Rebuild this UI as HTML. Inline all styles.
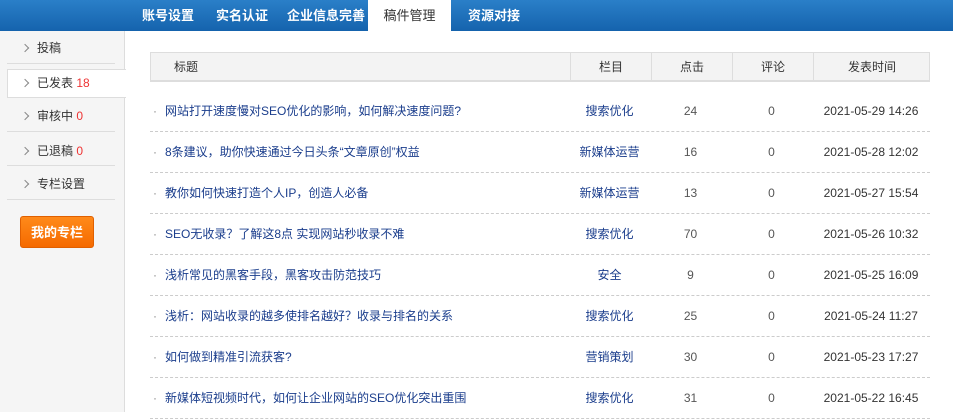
<!DOCTYPE html>
<html><head><meta charset="utf-8"><style>
*{margin:0;padding:0;box-sizing:border-box}
body{width:953px;height:412px;overflow:hidden;background:#fff;font-family:"Liberation Sans","Noto Sans CJK SC",sans-serif;font-size:12px;color:#333;position:relative}
.top{position:absolute;left:0;top:0;width:953px;height:31px;background:linear-gradient(#2a7fc8,#1563ad);}
.tab{position:absolute;top:0;height:31px;line-height:31px;color:#fff;font-weight:bold;font-size:13px}
.tab.on{background:#fff;color:#333;font-weight:normal;left:368px;width:83px;text-align:center}
.side{position:absolute;left:0;top:31px;width:125px;height:381px;background:#f5f5f5;border-right:1px solid #ddd}
.it{position:absolute;left:22px;width:92px;font-size:12px;color:#333;line-height:16px}
.it:before{content:"";position:absolute;left:0;top:5px;width:5px;height:5px;border-top:1px solid #888;border-right:1px solid #888;transform:rotate(45deg)}
.it span{margin-left:15px}
.ln{position:absolute;left:7px;width:108px;height:1px;background:#ddd}
.red{color:#e33;font-weight:normal}
.btn{position:absolute;left:20px;top:216px;width:74px;height:32px;background:linear-gradient(#ff8a1a,#f56a00);border-radius:3px;color:#fff;font-weight:bold;font-size:13px;text-align:center;line-height:31px;border:1px solid #e06000}
.th{position:absolute;left:150px;top:52px;width:780px;height:30px;background:#f3f3f3;border:1px solid #ddd;border-bottom:2px solid #ddd}
.th div{position:absolute;top:0;height:28px;line-height:28px;text-align:center;font-size:12px;color:#333}
.sep{border-left:1px solid #ddd}
.row{position:absolute;left:150px;width:780px;height:41px;border-bottom:1px dashed #ccc;font-size:12px}
.row div{position:absolute;top:0;line-height:40px}
.t{left:15px;color:#1a3d8c}
.t:before{content:"·";position:absolute;left:-12px;color:#888}
.c{left:419px;width:81px;text-align:center;color:#1a3d8c}
.n{left:500px;width:81px;text-align:center;color:#555}
.m{left:581px;width:81px;text-align:center;color:#555}
.d{left:662px;width:118px;text-align:center;color:#333}
</style></head><body>
<div class="top"></div>
<div class="tab" style="left:142px">账号设置</div>
<div class="tab" style="left:216px">实名认证</div>
<div class="tab" style="left:287px">企业信息完善</div>
<div class="tab on">稿件管理</div>
<div class="tab" style="left:468px">资源对接</div>
<div class="side">
<div class="it" style="top:9px"><span>投稿</span></div>
<div class="ln" style="top:32px"></div>
<div style="position:absolute;left:7px;top:38px;width:119px;height:29px;background:#fff;border:1px solid #ddd;border-right:none"></div>
<div class="it" style="top:44px"><span>已发表 <b class="red">18</b></span></div>
<div class="it" style="top:77px"><span>审核中 <b class="red">0</b></span></div>
<div class="ln" style="top:100px"></div>
<div class="it" style="top:112px"><span>已退稿 <b class="red">0</b></span></div>
<div class="ln" style="top:134px"></div>
<div class="it" style="top:145px"><span>专栏设置</span></div>
<div class="ln" style="top:168px"></div>
</div>
<div class="btn">我的专栏</div>
<div class="th">
<div style="left:0;width:70px">标题</div>
<div class="sep" style="left:419px;width:81px">栏目</div>
<div class="sep" style="left:500px;width:81px">点击</div>
<div class="sep" style="left:581px;width:81px">评论</div>
<div class="sep" style="left:662px;width:117px">发表时间</div>
</div>
<div class="row" style="top:91px"><div class="t">网站打开速度慢对SEO优化的影响，如何解决速度问题?</div><div class="c">搜索优化</div><div class="n">24</div><div class="m">0</div><div class="d">2021-05-29 14:26</div></div>
<div class="row" style="top:132px"><div class="t">8条建议，助你快速通过今日头条“文章原创”权益</div><div class="c">新媒体运营</div><div class="n">16</div><div class="m">0</div><div class="d">2021-05-28 12:02</div></div>
<div class="row" style="top:173px"><div class="t">教你如何快速打造个人IP，创造人必备</div><div class="c">新媒体运营</div><div class="n">13</div><div class="m">0</div><div class="d">2021-05-27 15:54</div></div>
<div class="row" style="top:214px"><div class="t">SEO无收录？了解这8点 实现网站秒收录不难</div><div class="c">搜索优化</div><div class="n">70</div><div class="m">0</div><div class="d">2021-05-26 10:32</div></div>
<div class="row" style="top:255px"><div class="t">浅析常见的黑客手段，黑客攻击防范技巧</div><div class="c">安全</div><div class="n">9</div><div class="m">0</div><div class="d">2021-05-25 16:09</div></div>
<div class="row" style="top:296px"><div class="t">浅析：网站收录的越多使排名越好？收录与排名的关系</div><div class="c">搜索优化</div><div class="n">25</div><div class="m">0</div><div class="d">2021-05-24 11:27</div></div>
<div class="row" style="top:337px"><div class="t">如何做到精准引流获客?</div><div class="c">营销策划</div><div class="n">30</div><div class="m">0</div><div class="d">2021-05-23 17:27</div></div>
<div class="row" style="top:378px"><div class="t">新媒体短视频时代，如何让企业网站的SEO优化突出重围</div><div class="c">搜索优化</div><div class="n">31</div><div class="m">0</div><div class="d">2021-05-22 16:45</div></div>
</body></html>
